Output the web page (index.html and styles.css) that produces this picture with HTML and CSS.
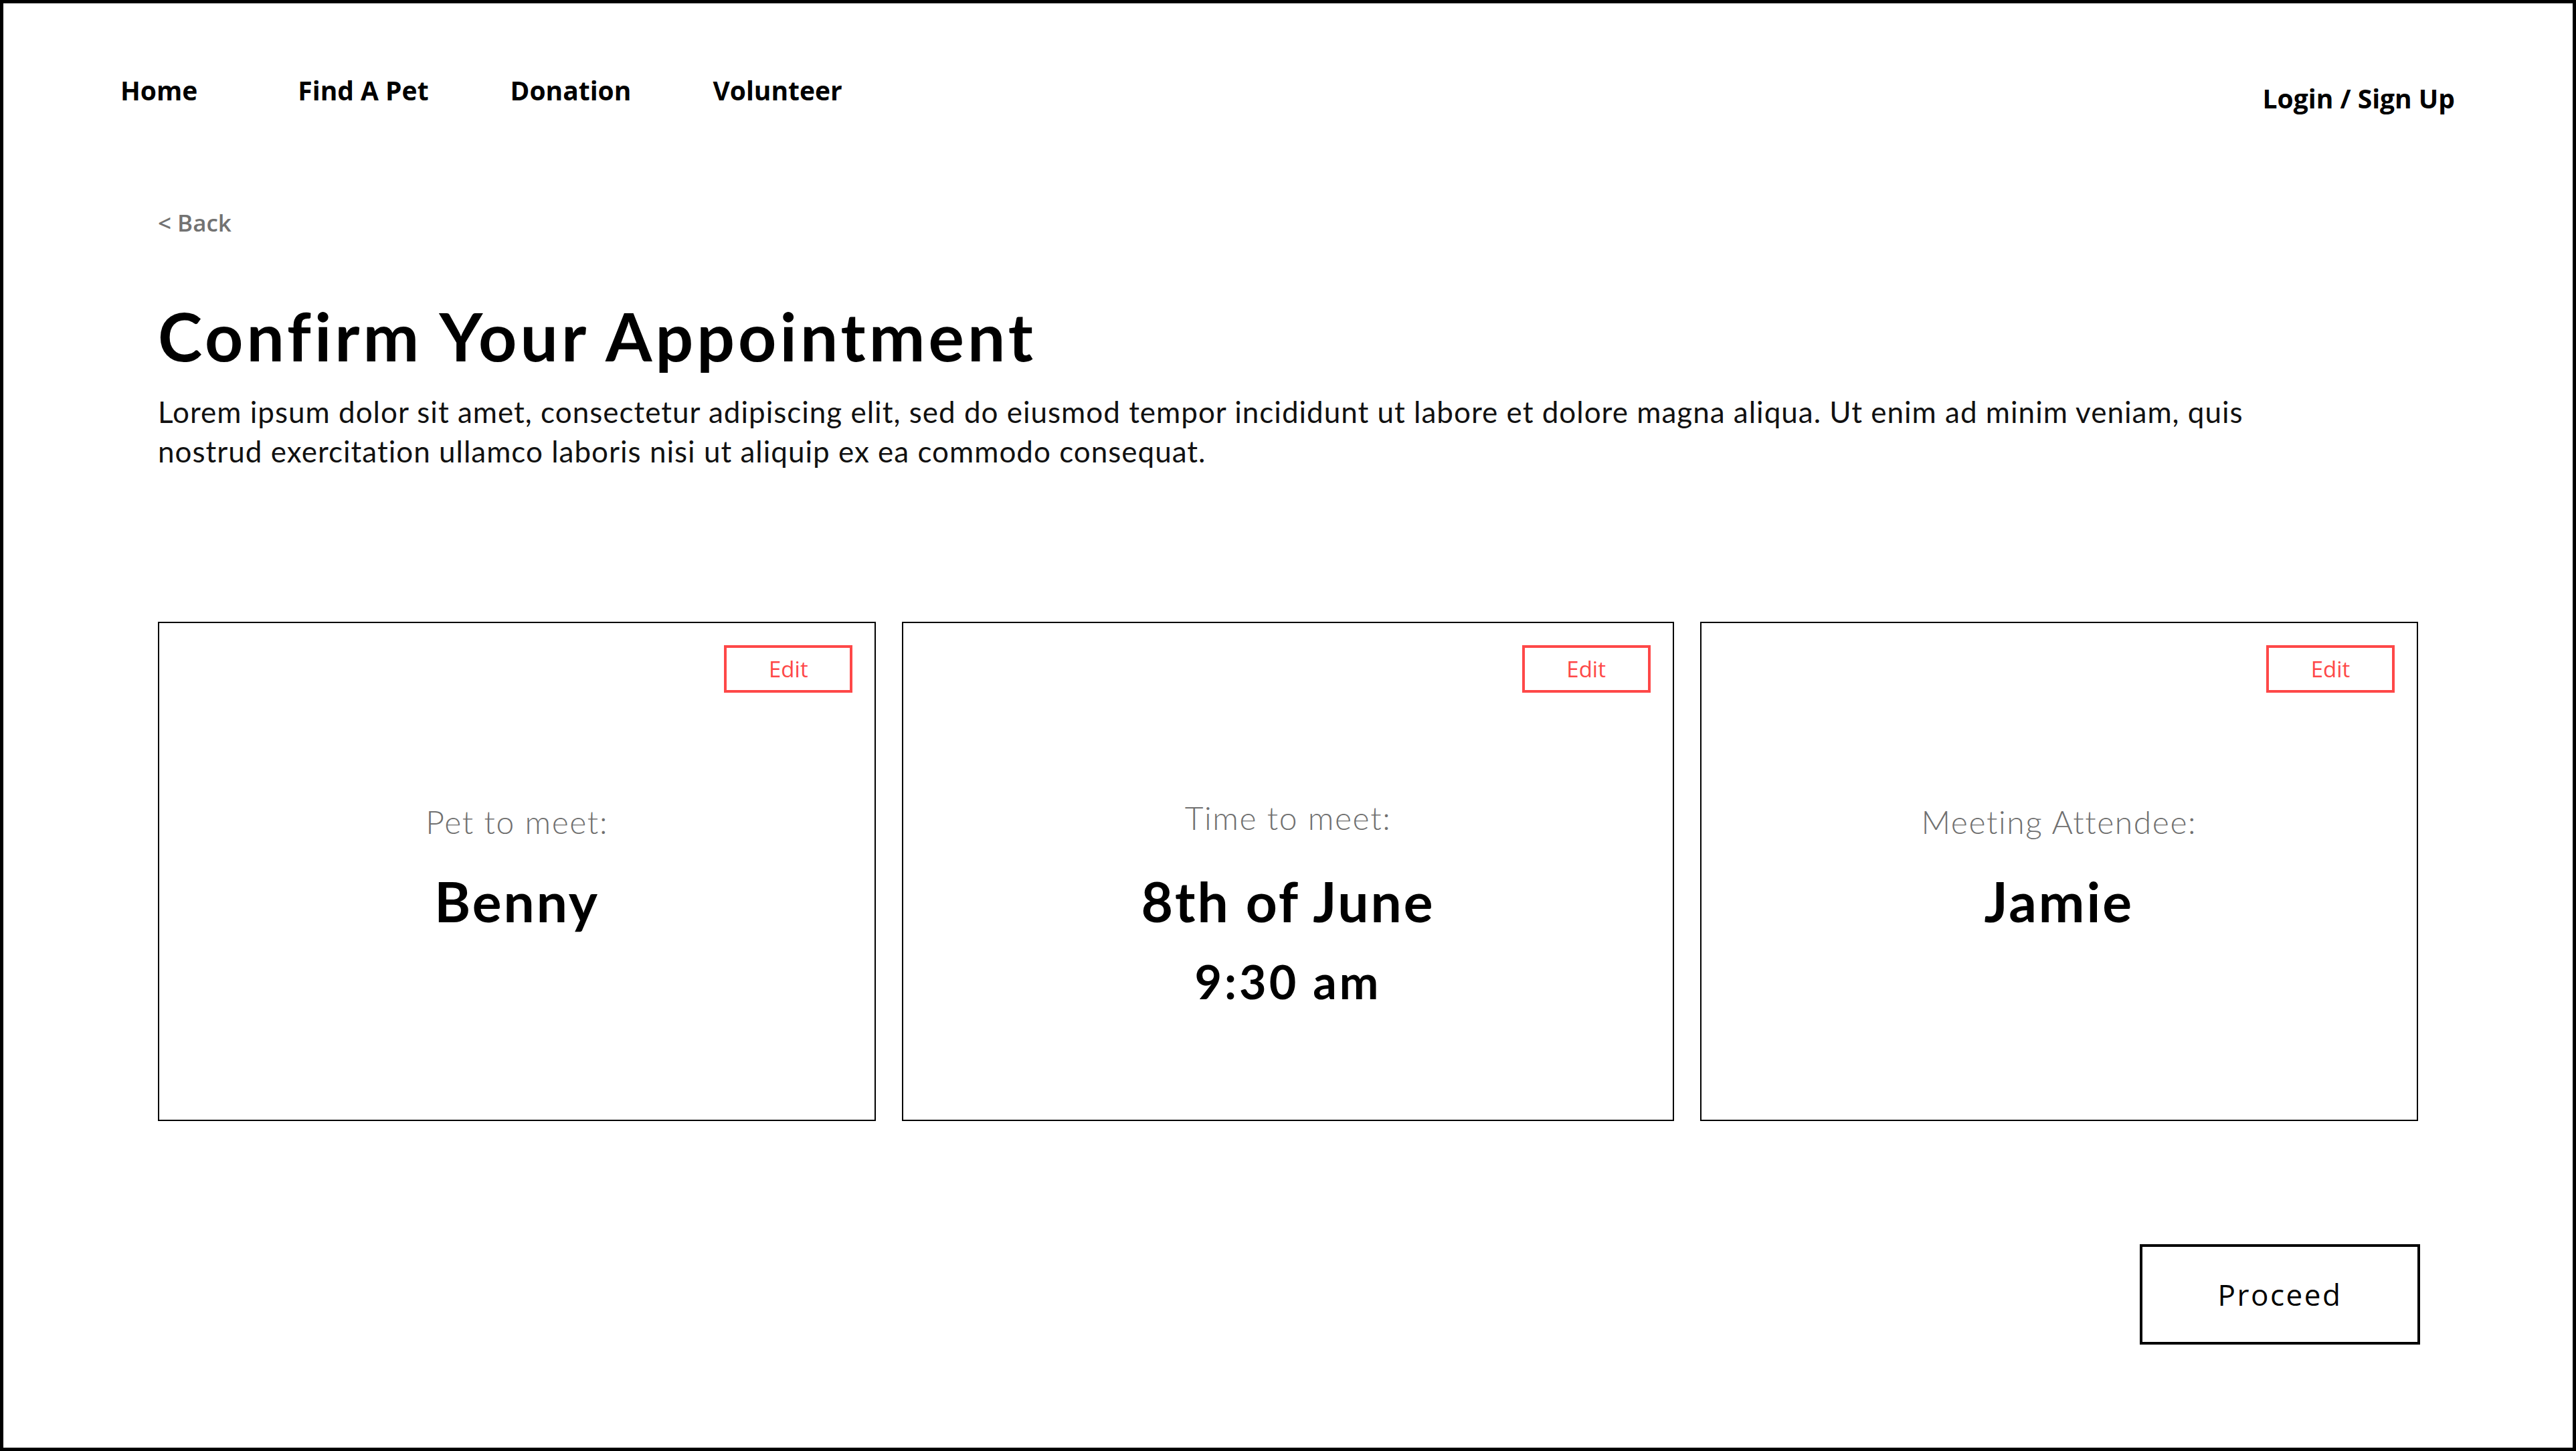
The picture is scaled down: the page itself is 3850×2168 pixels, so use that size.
FILE: index.html
```html
<!DOCTYPE html>
<html lang="en">
<head>
    <meta charset="UTF-8">
    <meta name="viewport" content="width=device-width, initial-scale=1.0">
    <title>Confirm Your Appointment</title>
    <link rel="stylesheet" href="styles.css">
</head>
<body>
    <div class="page">
        <header class="nav">
            <nav class="nav-links">
                <a href="#">Home</a>
                <a href="#">Find A Pet</a>
                <a href="#">Donation</a>
                <a href="#">Volunteer</a>
            </nav>
            <a href="#" class="login">Login / Sign Up</a>
        </header>

        <main class="content">
            <a href="#" class="back">&lt; Back</a>
            <h1>Confirm Your Appointment</h1>
            <p class="intro">Lorem ipsum dolor sit amet, consectetur adipiscing elit, sed do eiusmod tempor incididunt ut labore et dolore magna aliqua. Ut enim ad minim veniam, quis nostrud exercitation ullamco laboris nisi ut aliquip ex ea commodo consequat.</p>

            <div class="cards">
                <div class="card card-pet">
                    <button class="edit-btn">Edit</button>
                    <div class="card-label">Pet to meet:</div>
                    <div class="card-value">Benny</div>
                </div>
                <div class="card card-time">
                    <button class="edit-btn">Edit</button>
                    <div class="card-label">Time to meet:</div>
                    <div class="card-value">8th of June</div>
                    <div class="card-sub">9:30 am</div>
                </div>
                <div class="card card-attendee">
                    <button class="edit-btn">Edit</button>
                    <div class="card-label">Meeting Attendee:</div>
                    <div class="card-value">Jamie</div>
                </div>
            </div>

            <div class="actions">
                <button class="proceed-btn">Proceed</button>
            </div>
        </main>
    </div>
</body>
</html>
```

FILE: styles.css
```css
body {
    margin: 0;
    background: #fff;
    font-family: "Open Sans", Arial, sans-serif;
    color: #000;
}
a {
    color: inherit;
    text-decoration: none;
}
.page {
    width: 3850px;
    height: 2168px;
    border: 5px solid #000;
    box-sizing: border-box;
}

/* top bar */
.nav {
    display: flex;
    justify-content: space-between;
    align-items: flex-start;
    padding: 107px 176px 0 175px;
}
.nav-links {
    display: flex;
    gap: 122px;
}
.nav-links a {
    font-size: 39px;
    font-weight: 700;
    line-height: 1.2;
}
.nav-links a:first-child {
    margin-right: 28px;
}
.login {
    font-size: 39px;
    font-weight: 700;
    line-height: 1.2;
    margin-top: 12px;
}

/* page body */
.content {
    padding: 0 231px;
}
.back {
    display: block;
    margin-top: 141px;
    font-size: 35px;
    font-weight: 600;
    line-height: 1.2;
    color: #727272;
}
h1 {
    font-family: Lato, "Open Sans", sans-serif;
    font-size: 100px;
    font-weight: 700;
    line-height: 1.2;
    letter-spacing: 5px;
    margin: 87px 0 0 0;
}
.intro {
    font-family: Lato, "Open Sans", sans-serif;
    font-size: 44px;
    line-height: 59px;
    letter-spacing: 1px;
    margin: 25px 0 0 0;
    max-width: 3200px;
    color: #111;
}

/* summary cards */
.cards {
    display: flex;
    gap: 39px;
    margin-top: 225px;
}
.card {
    height: 746px;
    border: 2px solid #000;
    box-sizing: border-box;
    padding: 33px 33px 0 33px;
    display: flex;
    flex-direction: column;
    align-items: center;
    font-family: Lato, "Open Sans", sans-serif;
}
.card-pet, .card-attendee {
    width: 1074px;
}
.card-time {
    width: 1154px;
}
.edit-btn {
    align-self: flex-end;
    width: 192px;
    height: 71px;
    border: 4px solid #fe4848;
    background: #fff;
    color: #fe4848;
    font-family: "Open Sans", Arial, sans-serif;
    font-size: 33px;
    padding: 0;
}
.card-label {
    margin-top: 164px;
    font-size: 48px;
    font-weight: 300;
    line-height: 1.2;
    letter-spacing: 1.6px;
    color: #707070;
}
.card-value {
    margin-top: 41px;
    font-size: 82px;
    font-weight: 700;
    line-height: 1.2;
    letter-spacing: 3px;
}
.card-time .card-label {
    margin-top: 158px;
}
.card-time .card-value {
    margin-top: 47px;
}
.card-sub {
    margin-top: 28px;
    font-size: 70px;
    font-weight: 700;
    line-height: 1.2;
    letter-spacing: 4px;
}

.actions {
    display: flex;
    justify-content: flex-end;
    margin-top: 184px;
    margin-right: -3px;
}
.proceed-btn {
    width: 419px;
    height: 150px;
    border: 4px solid #000;
    background: #fff;
    color: #000;
    font-family: "Open Sans", Arial, sans-serif;
    font-size: 44px;
    letter-spacing: 2.5px;
    padding: 0;
}
```
